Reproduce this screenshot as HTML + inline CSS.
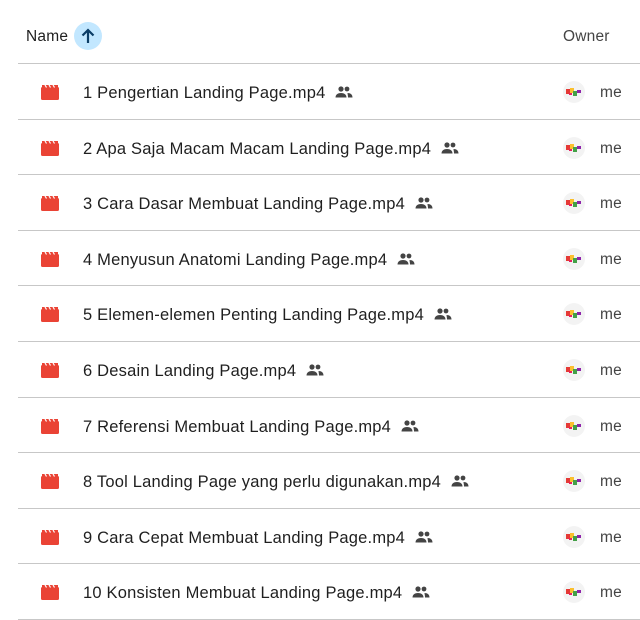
<!DOCTYPE html>
<html><head><style>
body{margin:0;width:640px;height:618px;overflow:hidden;background:#fff;font-family:"Liberation Sans",Arial,sans-serif;color:#1f1f1f}
.hdr{position:absolute;top:0;left:18px;width:622px;height:64px;border-bottom:1px solid #c7c7c7;box-sizing:border-box}
.hn{position:absolute;left:8px;top:28px;font-size:15.5px;letter-spacing:0.2px}
.arr{position:absolute;left:56px;top:22px;width:28px;height:28px;border-radius:50%;background:#c2e7ff}
.ho{position:absolute;left:545px;top:28px;font-size:15.5px;color:#444;letter-spacing:0.2px}
.row{position:absolute;left:18px;width:622px;height:55.6px;border-bottom:1px solid #c7c7c7;box-sizing:border-box}
.ic{position:absolute;left:23px;top:21px;width:18px;height:15px}
.t{position:absolute;left:65px;top:20px;font-size:16.5px;letter-spacing:0.2px;white-space:nowrap}
.t svg{vertical-align:0px;margin-left:10px}
.av{position:absolute;left:545px;top:17px;width:22px;height:22px;border-radius:50%;background:#f3f3f3}
.me{position:absolute;left:582px;top:20px;font-size:15.5px;color:#444;letter-spacing:0.2px}
</style></head><body>
<div class="hdr"><div class="hn">Name</div>
<div class="arr"><svg width="28" height="28" viewBox="0 0 28 28"><path d="M14 21V8M8.5 13.5L14 8l5.5 5.5" stroke="#0b3d66" stroke-width="2.2" fill="none"/></svg></div>
<div class="ho">Owner</div></div>
<div id="rows"></div>
<script>
var n=["1 Pengertian Landing Page.mp4","2 Apa Saja Macam Macam Landing Page.mp4","3 Cara Dasar Membuat Landing Page.mp4","4 Menyusun Anatomi Landing Page.mp4","5 Elemen-elemen Penting Landing Page.mp4","6 Desain Landing Page.mp4","7 Referensi Membuat Landing Page.mp4","8 Tool Landing Page yang perlu digunakan.mp4","9 Cara Cepat Membuat Landing Page.mp4","10 Konsisten Membuat Landing Page.mp4"];
var ppl='<svg width="18" height="12" viewBox="0 0 18 12"><circle cx="6" cy="3" r="2.6" fill="#444"/><circle cx="12" cy="3" r="2.4" fill="#444"/><path d="M0.5 11.5c0-3 2.5-4.5 5.5-4.5s5.5 1.5 5.5 4.5z" fill="#444"/><path d="M12.5 7c3 0 5 1.5 5 4.5h-4.5c0-2-0.5-3.5-0.5-4.5z" fill="#444"/></svg>';
var ic='<svg class="ic" viewBox="0 0 18 15"><rect x="0" y="2" width="18" height="13" rx="1.5" fill="#ea4335"/><path d="M1 0h16v3H1z" fill="#ea4335"/><path d="M4 0l1.5 2.5M8 0l1.5 2.5M12 0l1.5 2.5" stroke="#fff" stroke-width="1.2"/></svg>';
var av='<div class="av"><svg width="22" height="22" viewBox="0 0 22 22"><rect x="3" y="8" width="5" height="5" fill="#e53935"/><rect x="7" y="7" width="4" height="5" fill="#fbc02d"/><rect x="10" y="10" width="4" height="5" fill="#43a047"/><rect x="14" y="9" width="4" height="3" fill="#8e24aa"/><rect x="6" y="12" width="3" height="2" fill="#e91e63"/></svg></div>';
var h='';for(var i=0;i<10;i++){h+='<div class="row" style="top:'+(64+i*55.6)+'px">'+ic+'<div class="t">'+n[i]+ppl+'</div>'+av+'<div class="me">me</div></div>';}
document.getElementById('rows').innerHTML=h;
</script>
</body></html>
